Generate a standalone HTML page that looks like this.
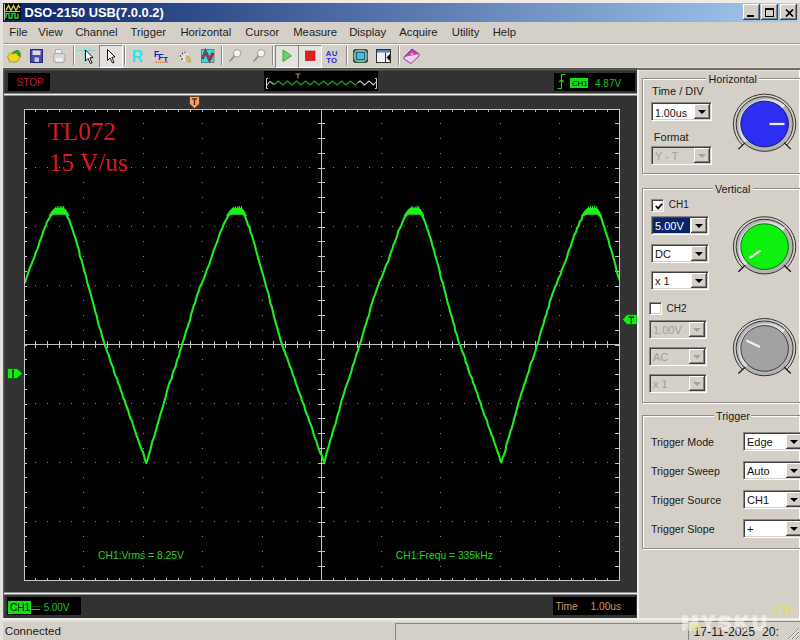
<!DOCTYPE html>
<html><head><meta charset="utf-8">
<style>
html,body{margin:0;padding:0}
body{width:800px;height:640px;overflow:hidden;background:#d4d0c8;position:relative;font-family:"Liberation Sans",sans-serif;font-size:12px;color:#000}
.a{position:absolute}
.t{position:absolute;white-space:nowrap;line-height:1}
.sep{position:absolute;top:46px;width:1px;height:19px;background:#8a8782;border-right:1px solid #fff}
.pbtn{position:absolute;top:45px;height:21px;border-top:1px solid #8a8782;border-left:1px solid #8a8782;border-right:1px solid #fff;border-bottom:1px solid #fff;background:#e4e2dc}
.grp{position:absolute;border:1px solid #8e8b86;box-shadow:inset 1px 1px 0 #fff, 1px 1px 0 #fff}
.gbg{position:absolute;background:#d4d0c8;height:5px}
.cb{position:absolute;border:1px solid;border-color:#8a8782 #fff #fff #8a8782;box-shadow:inset 1px 1px 0 #404040, inset -1px -1px 0 #d4d0c8}
.btn{position:absolute;top:1px;width:16px;height:15px;background:#d4d0c8;box-shadow:inset -1px -1px 0 #404040, inset 1px 1px 0 #fff, inset -2px -2px 0 #808080}
.arr{position:absolute;left:4px;top:6px;width:0;height:0;border-left:4px solid transparent;border-right:4px solid transparent;border-top:4px solid #000}
.arr.dis{border-top-color:#a4a09a}
.chk{position:absolute;width:9px;height:9px;background:#fff;border:1px solid;border-color:#8a8782 #fff #fff #8a8782;box-shadow:inset 1px 1px 0 #404040, inset -1px -1px 0 #d4d0c8;padding:1px}
</style></head><body>

<div class="a" style="left:0px;top:0px;width:800px;height:3px;background:#eeebe6;"></div>
<div class="a" style="left:3px;top:3px;width:795px;height:19px;background:linear-gradient(to right,#0a246a 0%,#a6caf0 100%);"></div>
<svg class="a" style="left:4px;top:4px" width="17" height="16" viewBox="0 0 17 16">
<rect x="0" y="0" width="17" height="16" fill="#000"/>
<path d="M0.5 0V16" stroke="#b8c0c0" stroke-width="1"/>
<path d="M2 6.5 L4.5 1.5 L7 6.5 L9.5 1.5 L12 6.5 L14.5 1.5 L16 4" stroke="#d8d040" stroke-width="1.4" fill="none"/>
<path d="M1 7.5H16" stroke="#60d8c8" stroke-width="1"/>
<path d="M2 14V9.5H5V14H8V9.5H11V14H14V9.5" stroke="#28d838" stroke-width="1.4" fill="none"/>
</svg>
<div class="t" style="left:24.50px;top:6.72px;font-size:12.85px;color:#fff;font-weight:bold;">DSO-2150 USB(7.0.0.2)</div>
<div class="a" style="left:743px;top:4px;width:17px;height:16px;background:#d4d0c8;box-shadow:inset -1px -1px 0 #404040,inset 1px 1px 0 #fff,inset -2px -2px 0 #808080"></div>
<div class="a" style="left:761px;top:4px;width:17px;height:16px;background:#d4d0c8;box-shadow:inset -1px -1px 0 #404040,inset 1px 1px 0 #fff,inset -2px -2px 0 #808080"></div>
<div class="a" style="left:780px;top:4px;width:17px;height:16px;background:#d4d0c8;box-shadow:inset -1px -1px 0 #404040,inset 1px 1px 0 #fff,inset -2px -2px 0 #808080"></div>
<div class="a" style="left:747px;top:15px;width:7px;height:2px;background:#000;"></div>
<div class="a" style="left:765px;top:8px;width:7px;height:6px;border:1px solid #000;border-top-width:2px"></div>
<svg class="a" style="left:784.5px;top:8.5px" width="9" height="8"><path d="M1 0.5L8 7.5M8 0.5L1 7.5" stroke="#000" stroke-width="1.7"/></svg>
<div class="t" style="left:9.30px;top:26.73px;font-size:11.30px;color:#1e1e1e;">File</div>
<div class="t" style="left:38.30px;top:26.73px;font-size:11.30px;color:#1e1e1e;">View</div>
<div class="t" style="left:75.40px;top:26.73px;font-size:11.30px;color:#1e1e1e;">Channel</div>
<div class="t" style="left:130.60px;top:26.73px;font-size:11.30px;color:#1e1e1e;">Trigger</div>
<div class="t" style="left:180.40px;top:26.73px;font-size:11.30px;color:#1e1e1e;">Horizontal</div>
<div class="t" style="left:245.30px;top:26.73px;font-size:11.30px;color:#1e1e1e;">Cursor</div>
<div class="t" style="left:293.20px;top:26.73px;font-size:11.30px;color:#1e1e1e;">Measure</div>
<div class="t" style="left:349.20px;top:26.73px;font-size:11.30px;color:#1e1e1e;">Display</div>
<div class="t" style="left:399.30px;top:26.73px;font-size:11.30px;color:#1e1e1e;">Acquire</div>
<div class="t" style="left:451.80px;top:26.73px;font-size:11.30px;color:#1e1e1e;">Utility</div>
<div class="t" style="left:492.70px;top:26.73px;font-size:11.30px;color:#1e1e1e;">Help</div>
<div class="a" style="left:3px;top:43px;width:797px;height:1px;background:#a09d98;"></div>
<div class="a" style="left:3px;top:44px;width:797px;height:1px;background:#f6f5f2;"></div>
<div class="a" style="left:3px;top:67px;width:797px;height:1px;background:#dedbd6;"></div>
<div class="sep" style="left:73px"></div>
<div class="sep" style="left:124px"></div>
<div class="sep" style="left:221px"></div>
<div class="sep" style="left:272px"></div>
<div class="sep" style="left:346px"></div>
<div class="sep" style="left:398px"></div>
<div class="pbtn" style="left:99px;width:22px"></div>
<div class="pbtn" style="left:275px;width:22px"></div>
<div class="pbtn" style="left:298px;width:22px"></div>
<svg class="a" style="left:0;top:42px" width="430" height="26" viewBox="0 42 430 26">
<path d="M7.5 56 L12 52 L19 53.5 L20.5 57 L17 62 L9.5 62 Z" fill="#f0d820" stroke="#9a8a10" stroke-width="0.7"/>
<path d="M12 54 Q14.5 49.5 18.5 50.5 Q21 52 20.3 56.5 L18 55.5 Q18 52.5 15 53 Z" fill="#28b028" stroke="#187018" stroke-width="0.5"/>
<rect x="30.5" y="49.5" width="12" height="13" fill="#4a4aac" stroke="#28287a" stroke-width="1"/>
<rect x="32.5" y="50.5" width="8" height="4.5" fill="#d8d8e8"/>
<rect x="34.5" y="57.5" width="4.5" height="4.5" fill="#c8c8e0"/>
<path d="M55.5 49.5 H61.5 V54 H55.5 Z" fill="#e8f0f8" stroke="#a0a8b8" stroke-width="0.8"/>
<path d="M53.5 55.5 Q53.5 53.5 56 53.5 H62.5 Q65 53.5 65 55.5 V60 Q65 62.5 62 62.5 H56 Q53.5 62.5 53.5 60 Z" fill="#d8d8d8" stroke="#9a9a9a" stroke-width="0.8"/>
<path d="M56 58.5 H62.5 V61.5 H56 Z" fill="#f4f4f4"/>
<path d="M78 50.5 H96 M85 48 V64" stroke="#38d8d8" stroke-width="1.2" stroke-dasharray="1.5 1"/>
<path d="M85.5 50 L85.5 61 L88 58.5 L90.5 63.5 L92 62.8 L89.8 57.8 L93 57.5 Z" fill="#fff" stroke="#000" stroke-width="0.9"/>
<path d="M107.5 49.5 L107.5 60.5 L110 58 L112.5 63 L114 62.3 L111.8 57.3 L115 57 Z" fill="#fff" stroke="#000" stroke-width="0.9"/>
<text x="131.5" y="62" font-family="Liberation Sans" font-weight="bold" font-size="16" fill="#30e4f4">R</text>
<text x="154" y="56.6" font-family="Liberation Sans" font-weight="bold" font-size="8.5" fill="#1818c8">F</text>
<text x="158.3" y="60" font-family="Liberation Sans" font-weight="bold" font-size="8.5" fill="#1818c8">F</text>
<text x="163.3" y="62.2" font-family="Liberation Sans" font-weight="bold" font-size="8" fill="#1818c8">T</text>
<path d="M155.5 62.3 H168.5" stroke="#f07858" stroke-width="1.4" stroke-dasharray="1.5 0.7"/>
<circle cx="184" cy="56.5" r="5.8" fill="#e4e4e4" stroke="#b8b8b8" stroke-width="0.7"/>
<circle cx="182.5" cy="53.5" r="0.9" fill="#505050"/><circle cx="180.5" cy="56" r="0.9" fill="#505050"/><circle cx="182" cy="59" r="0.9" fill="#505050"/><circle cx="185" cy="52.5" r="0.9" fill="#707070"/>
<path d="M186.5 55 Q191.5 58 190.5 62.3 Q186 62.5 186 59 Z" fill="#d4c060" stroke="#9a8a30" stroke-width="0.5"/>
<rect x="201.5" y="49.5" width="12.5" height="13" fill="#30e0e4" stroke="#507070" stroke-width="0.8"/>
<path d="M202.3 59 L205.5 51.5 L209.5 60 L213 53" stroke="#6a4a5c" stroke-width="3" fill="none"/>
<path d="M209.5 60 L213 53" stroke="#c42044" stroke-width="2.6" fill="none"/>
<circle cx="237" cy="53.3" r="3.6" fill="#f4f4f4" stroke="#a8a8a8" stroke-width="1.2"/>
<path d="M234.5 56 L229.5 61.5" stroke="#909090" stroke-width="1.8"/>
<circle cx="261" cy="53.3" r="3.6" fill="#f4f4f4" stroke="#a8a8a8" stroke-width="1.2"/>
<path d="M258.5 56 L253.5 61.5" stroke="#909090" stroke-width="1.8"/>
<path d="M283 50 L291.5 55.8 L283 61.5 Z" fill="#68d468" stroke="#309030" stroke-width="0.8"/>
<rect x="305.5" y="51" width="9.5" height="9.5" fill="#e42020" stroke="#a01010" stroke-width="0.6"/>
<text x="325.8" y="55.6" font-family="Liberation Sans" font-weight="bold" font-size="7.7" fill="#2c2ce4" letter-spacing="0.3">AU</text>
<text x="326.2" y="62.8" font-family="Liberation Sans" font-weight="bold" font-size="7.7" fill="#2c2ce4" letter-spacing="0.3">TO</text>
<rect x="353.5" y="49.5" width="14" height="13" rx="2" fill="#78b898" stroke="#406050" stroke-width="1"/>
<rect x="356.5" y="52.5" width="8" height="7" fill="#48bce4" stroke="#204060" stroke-width="0.8"/>
<path d="M354 50 h2.5 M354 50 v2.5 M367 50 h-2.5 M367 50 v2.5 M354 62 h2.5 M354 62 v-2.5 M367 62 h-2.5 M367 62 v-2.5" stroke="#203028" stroke-width="1.2"/>
<rect x="376.5" y="49.5" width="14" height="13" fill="#f0f0f0" stroke="#303030" stroke-width="1"/>
<rect x="377" y="50" width="13" height="2.5" fill="#5080d0"/>
<path d="M385.5 52.5 V62" stroke="#303030" stroke-width="1"/>
<path d="M390 54 L386.5 57.5 L390 61 Z" fill="#000"/>
<path d="M404 57 L412 49 L419 54 L411 62 Z" fill="#c040c0" stroke="#702070" stroke-width="0.8"/>
<path d="M404 57 L404 59 L411 63.5 L419 56 L419 54" fill="#f0d0f0" stroke="#702070" stroke-width="0.8"/>
<circle cx="412" cy="54" r="1.5" fill="#f0a060"/>
</svg>

<div class="a" style="left:3px;top:68px;width:634px;height:550px;background:#323232;"></div>
<div class="a" style="left:3px;top:68px;width:634px;height:1px;background:#4e4e4e;"></div>
<div class="a" style="left:3px;top:69px;width:634px;height:1px;background:#5c5c5c;"></div>
<div class="a" style="left:3px;top:70px;width:634px;height:1px;background:#444;"></div>
<div class="a" style="left:3px;top:68px;width:1px;height:550px;background:#5e5e5e;"></div>
<div class="a" style="left:4px;top:71px;width:1px;height:547px;background:#444;"></div>
<div class="a" style="left:4px;top:93px;width:633px;height:1px;background:#8c8c8c;"></div>
<div class="a" style="left:4px;top:94px;width:633px;height:1px;background:#f0f0f0;"></div>
<div class="a" style="left:4px;top:95px;width:633px;height:1px;background:#8c8c8c;"></div>
<div class="a" style="left:4px;top:592px;width:633px;height:1px;background:#8c8c8c;"></div>
<div class="a" style="left:4px;top:593px;width:633px;height:1px;background:#f0f0f0;"></div>
<div class="a" style="left:4px;top:594px;width:633px;height:1px;background:#8c8c8c;"></div>
<div class="a" style="left:637px;top:70px;width:2px;height:550px;background:#f2f2f2;"></div>
<div class="a" style="left:3px;top:618px;width:797px;height:2px;background:#efeeea;"></div>
<div class="a" style="left:3px;top:620px;width:797px;height:2px;background:#e2dfda;"></div>
<div class="a" style="left:0px;top:0px;width:3px;height:640px;background:#e4e1dc;"></div>
<div class="a" style="left:8px;top:73px;width:42px;height:18px;background:#000;"></div>
<div class="t" style="left:16.50px;top:78.05px;font-size:10.10px;color:#c01e2c;">STOP</div>
<div class="a" style="left:264px;top:71px;width:114px;height:20px;background:#000;"></div>
<svg class="a" style="left:264px;top:71px" width="114" height="20" viewBox="264 71 114 20">
<path d="M268 78.5 H266.5 V88.5 H268 M375 78.5 H376.5 V88.5 H375" stroke="#d0d0d0" stroke-width="1" fill="none"/>
<path d="M274 84.5 L278.5 81 L283 85 L287.5 81 L292 85 L296.5 81 L301 85 L305.5 81 L310 85 L314.5 81 L319 85 L323.5 81 L328 85 L332.5 81 L337 85 L341.5 81 L346 85 L350.5 81 L355 85 L358 82.5" stroke="#1aa81a" stroke-width="1.2" fill="none"/>
<path d="M267 85 L270 81.5 L274 84.5" stroke="#c8c8c8" stroke-width="1.1" fill="none"/>
<path d="M358 82.5 L360 81 L364.5 85 L369 81 L373.5 85 L376 82" stroke="#c8c8c8" stroke-width="1.1" fill="none"/>
<path d="M295.5 74 H300.5 M298 74 V78.5" stroke="#b88050" stroke-width="1.2"/>
</svg>
<div class="a" style="left:554px;top:72.5px;width:81px;height:18.7px;background:#000;"></div>
<svg class="a" style="left:557px;top:73px" width="9" height="17"><path d="M0.5 15.5H4.5V1.5H8.5 M2.2 9 L4.5 6.8 L6.8 9" stroke="#28d028" stroke-width="1.1" fill="none"/></svg>
<div class="a" style="left:570px;top:78px;width:18px;height:10px;background:#10e010;"></div>
<div class="t" style="left:572.00px;top:79.63px;font-size:8.00px;color:#000;letter-spacing:-0.2px">CH1</div>
<div class="t" style="left:595.00px;top:78.53px;font-size:10.00px;color:#22c022;">4.87V</div>
<div class="a" style="left:24px;top:109px;width:596px;height:472px;background:#000;"></div>
<svg class="a" style="left:0;top:0" width="640" height="640" viewBox="0 0 640 640">
<defs><clipPath id="gc"><rect x="25" y="110" width="594" height="470"/></clipPath></defs>
<path d="M35 167h1v1h-1zM47 167h1v1h-1zM59 167h1v1h-1zM71 167h1v1h-1zM83 167h1v1h-1zM95 167h1v1h-1zM107 167h1v1h-1zM119 167h1v1h-1zM131 167h1v1h-1zM143 167h1v1h-1zM154 167h1v1h-1zM166 167h1v1h-1zM178 167h1v1h-1zM190 167h1v1h-1zM202 167h1v1h-1zM214 167h1v1h-1zM226 167h1v1h-1zM238 167h1v1h-1zM250 167h1v1h-1zM262 167h1v1h-1zM273 167h1v1h-1zM285 167h1v1h-1zM297 167h1v1h-1zM309 167h1v1h-1zM321 167h1v1h-1zM333 167h1v1h-1zM345 167h1v1h-1zM357 167h1v1h-1zM369 167h1v1h-1zM381 167h1v1h-1zM392 167h1v1h-1zM404 167h1v1h-1zM416 167h1v1h-1zM428 167h1v1h-1zM440 167h1v1h-1zM452 167h1v1h-1zM464 167h1v1h-1zM476 167h1v1h-1zM488 167h1v1h-1zM500 167h1v1h-1zM511 167h1v1h-1zM523 167h1v1h-1zM535 167h1v1h-1zM547 167h1v1h-1zM559 167h1v1h-1zM571 167h1v1h-1zM583 167h1v1h-1zM595 167h1v1h-1zM607 167h1v1h-1zM35 226h1v1h-1zM47 226h1v1h-1zM59 226h1v1h-1zM71 226h1v1h-1zM83 226h1v1h-1zM95 226h1v1h-1zM107 226h1v1h-1zM119 226h1v1h-1zM131 226h1v1h-1zM143 226h1v1h-1zM154 226h1v1h-1zM166 226h1v1h-1zM178 226h1v1h-1zM190 226h1v1h-1zM202 226h1v1h-1zM214 226h1v1h-1zM226 226h1v1h-1zM238 226h1v1h-1zM250 226h1v1h-1zM262 226h1v1h-1zM273 226h1v1h-1zM285 226h1v1h-1zM297 226h1v1h-1zM309 226h1v1h-1zM321 226h1v1h-1zM333 226h1v1h-1zM345 226h1v1h-1zM357 226h1v1h-1zM369 226h1v1h-1zM381 226h1v1h-1zM392 226h1v1h-1zM404 226h1v1h-1zM416 226h1v1h-1zM428 226h1v1h-1zM440 226h1v1h-1zM452 226h1v1h-1zM464 226h1v1h-1zM476 226h1v1h-1zM488 226h1v1h-1zM500 226h1v1h-1zM511 226h1v1h-1zM523 226h1v1h-1zM535 226h1v1h-1zM547 226h1v1h-1zM559 226h1v1h-1zM571 226h1v1h-1zM583 226h1v1h-1zM595 226h1v1h-1zM607 226h1v1h-1zM35 285h1v1h-1zM47 285h1v1h-1zM59 285h1v1h-1zM71 285h1v1h-1zM83 285h1v1h-1zM95 285h1v1h-1zM107 285h1v1h-1zM119 285h1v1h-1zM131 285h1v1h-1zM143 285h1v1h-1zM154 285h1v1h-1zM166 285h1v1h-1zM178 285h1v1h-1zM190 285h1v1h-1zM202 285h1v1h-1zM214 285h1v1h-1zM226 285h1v1h-1zM238 285h1v1h-1zM250 285h1v1h-1zM262 285h1v1h-1zM273 285h1v1h-1zM285 285h1v1h-1zM297 285h1v1h-1zM309 285h1v1h-1zM321 285h1v1h-1zM333 285h1v1h-1zM345 285h1v1h-1zM357 285h1v1h-1zM369 285h1v1h-1zM381 285h1v1h-1zM392 285h1v1h-1zM404 285h1v1h-1zM416 285h1v1h-1zM428 285h1v1h-1zM440 285h1v1h-1zM452 285h1v1h-1zM464 285h1v1h-1zM476 285h1v1h-1zM488 285h1v1h-1zM500 285h1v1h-1zM511 285h1v1h-1zM523 285h1v1h-1zM535 285h1v1h-1zM547 285h1v1h-1zM559 285h1v1h-1zM571 285h1v1h-1zM583 285h1v1h-1zM595 285h1v1h-1zM607 285h1v1h-1zM35 403h1v1h-1zM47 403h1v1h-1zM59 403h1v1h-1zM71 403h1v1h-1zM83 403h1v1h-1zM95 403h1v1h-1zM107 403h1v1h-1zM119 403h1v1h-1zM131 403h1v1h-1zM143 403h1v1h-1zM154 403h1v1h-1zM166 403h1v1h-1zM178 403h1v1h-1zM190 403h1v1h-1zM202 403h1v1h-1zM214 403h1v1h-1zM226 403h1v1h-1zM238 403h1v1h-1zM250 403h1v1h-1zM262 403h1v1h-1zM273 403h1v1h-1zM285 403h1v1h-1zM297 403h1v1h-1zM309 403h1v1h-1zM321 403h1v1h-1zM333 403h1v1h-1zM345 403h1v1h-1zM357 403h1v1h-1zM369 403h1v1h-1zM381 403h1v1h-1zM392 403h1v1h-1zM404 403h1v1h-1zM416 403h1v1h-1zM428 403h1v1h-1zM440 403h1v1h-1zM452 403h1v1h-1zM464 403h1v1h-1zM476 403h1v1h-1zM488 403h1v1h-1zM500 403h1v1h-1zM511 403h1v1h-1zM523 403h1v1h-1zM535 403h1v1h-1zM547 403h1v1h-1zM559 403h1v1h-1zM571 403h1v1h-1zM583 403h1v1h-1zM595 403h1v1h-1zM607 403h1v1h-1zM35 462h1v1h-1zM47 462h1v1h-1zM59 462h1v1h-1zM71 462h1v1h-1zM83 462h1v1h-1zM95 462h1v1h-1zM107 462h1v1h-1zM119 462h1v1h-1zM131 462h1v1h-1zM143 462h1v1h-1zM154 462h1v1h-1zM166 462h1v1h-1zM178 462h1v1h-1zM190 462h1v1h-1zM202 462h1v1h-1zM214 462h1v1h-1zM226 462h1v1h-1zM238 462h1v1h-1zM250 462h1v1h-1zM262 462h1v1h-1zM273 462h1v1h-1zM285 462h1v1h-1zM297 462h1v1h-1zM309 462h1v1h-1zM321 462h1v1h-1zM333 462h1v1h-1zM345 462h1v1h-1zM357 462h1v1h-1zM369 462h1v1h-1zM381 462h1v1h-1zM392 462h1v1h-1zM404 462h1v1h-1zM416 462h1v1h-1zM428 462h1v1h-1zM440 462h1v1h-1zM452 462h1v1h-1zM464 462h1v1h-1zM476 462h1v1h-1zM488 462h1v1h-1zM500 462h1v1h-1zM511 462h1v1h-1zM523 462h1v1h-1zM535 462h1v1h-1zM547 462h1v1h-1zM559 462h1v1h-1zM571 462h1v1h-1zM583 462h1v1h-1zM595 462h1v1h-1zM607 462h1v1h-1zM35 521h1v1h-1zM47 521h1v1h-1zM59 521h1v1h-1zM71 521h1v1h-1zM83 521h1v1h-1zM95 521h1v1h-1zM107 521h1v1h-1zM119 521h1v1h-1zM131 521h1v1h-1zM143 521h1v1h-1zM154 521h1v1h-1zM166 521h1v1h-1zM178 521h1v1h-1zM190 521h1v1h-1zM202 521h1v1h-1zM214 521h1v1h-1zM226 521h1v1h-1zM238 521h1v1h-1zM250 521h1v1h-1zM262 521h1v1h-1zM273 521h1v1h-1zM285 521h1v1h-1zM297 521h1v1h-1zM309 521h1v1h-1zM321 521h1v1h-1zM333 521h1v1h-1zM345 521h1v1h-1zM357 521h1v1h-1zM369 521h1v1h-1zM381 521h1v1h-1zM392 521h1v1h-1zM404 521h1v1h-1zM416 521h1v1h-1zM428 521h1v1h-1zM440 521h1v1h-1zM452 521h1v1h-1zM464 521h1v1h-1zM476 521h1v1h-1zM488 521h1v1h-1zM500 521h1v1h-1zM511 521h1v1h-1zM523 521h1v1h-1zM535 521h1v1h-1zM547 521h1v1h-1zM559 521h1v1h-1zM571 521h1v1h-1zM583 521h1v1h-1zM595 521h1v1h-1zM607 521h1v1h-1zM83 123h1v1h-1zM83 138h1v1h-1zM83 153h1v1h-1zM83 182h1v1h-1zM83 197h1v1h-1zM83 212h1v1h-1zM83 241h1v1h-1zM83 256h1v1h-1zM83 271h1v1h-1zM83 300h1v1h-1zM83 315h1v1h-1zM83 330h1v1h-1zM83 359h1v1h-1zM83 374h1v1h-1zM83 389h1v1h-1zM83 418h1v1h-1zM83 433h1v1h-1zM83 448h1v1h-1zM83 477h1v1h-1zM83 492h1v1h-1zM83 507h1v1h-1zM83 536h1v1h-1zM83 551h1v1h-1zM83 566h1v1h-1zM143 123h1v1h-1zM143 138h1v1h-1zM143 153h1v1h-1zM143 182h1v1h-1zM143 197h1v1h-1zM143 212h1v1h-1zM143 241h1v1h-1zM143 256h1v1h-1zM143 271h1v1h-1zM143 300h1v1h-1zM143 315h1v1h-1zM143 330h1v1h-1zM143 359h1v1h-1zM143 374h1v1h-1zM143 389h1v1h-1zM143 418h1v1h-1zM143 433h1v1h-1zM143 448h1v1h-1zM143 477h1v1h-1zM143 492h1v1h-1zM143 507h1v1h-1zM143 536h1v1h-1zM143 551h1v1h-1zM143 566h1v1h-1zM202 123h1v1h-1zM202 138h1v1h-1zM202 153h1v1h-1zM202 182h1v1h-1zM202 197h1v1h-1zM202 212h1v1h-1zM202 241h1v1h-1zM202 256h1v1h-1zM202 271h1v1h-1zM202 300h1v1h-1zM202 315h1v1h-1zM202 330h1v1h-1zM202 359h1v1h-1zM202 374h1v1h-1zM202 389h1v1h-1zM202 418h1v1h-1zM202 433h1v1h-1zM202 448h1v1h-1zM202 477h1v1h-1zM202 492h1v1h-1zM202 507h1v1h-1zM202 536h1v1h-1zM202 551h1v1h-1zM202 566h1v1h-1zM262 123h1v1h-1zM262 138h1v1h-1zM262 153h1v1h-1zM262 182h1v1h-1zM262 197h1v1h-1zM262 212h1v1h-1zM262 241h1v1h-1zM262 256h1v1h-1zM262 271h1v1h-1zM262 300h1v1h-1zM262 315h1v1h-1zM262 330h1v1h-1zM262 359h1v1h-1zM262 374h1v1h-1zM262 389h1v1h-1zM262 418h1v1h-1zM262 433h1v1h-1zM262 448h1v1h-1zM262 477h1v1h-1zM262 492h1v1h-1zM262 507h1v1h-1zM262 536h1v1h-1zM262 551h1v1h-1zM262 566h1v1h-1zM381 123h1v1h-1zM381 138h1v1h-1zM381 153h1v1h-1zM381 182h1v1h-1zM381 197h1v1h-1zM381 212h1v1h-1zM381 241h1v1h-1zM381 256h1v1h-1zM381 271h1v1h-1zM381 300h1v1h-1zM381 315h1v1h-1zM381 330h1v1h-1zM381 359h1v1h-1zM381 374h1v1h-1zM381 389h1v1h-1zM381 418h1v1h-1zM381 433h1v1h-1zM381 448h1v1h-1zM381 477h1v1h-1zM381 492h1v1h-1zM381 507h1v1h-1zM381 536h1v1h-1zM381 551h1v1h-1zM381 566h1v1h-1zM440 123h1v1h-1zM440 138h1v1h-1zM440 153h1v1h-1zM440 182h1v1h-1zM440 197h1v1h-1zM440 212h1v1h-1zM440 241h1v1h-1zM440 256h1v1h-1zM440 271h1v1h-1zM440 300h1v1h-1zM440 315h1v1h-1zM440 330h1v1h-1zM440 359h1v1h-1zM440 374h1v1h-1zM440 389h1v1h-1zM440 418h1v1h-1zM440 433h1v1h-1zM440 448h1v1h-1zM440 477h1v1h-1zM440 492h1v1h-1zM440 507h1v1h-1zM440 536h1v1h-1zM440 551h1v1h-1zM440 566h1v1h-1zM500 123h1v1h-1zM500 138h1v1h-1zM500 153h1v1h-1zM500 182h1v1h-1zM500 197h1v1h-1zM500 212h1v1h-1zM500 241h1v1h-1zM500 256h1v1h-1zM500 271h1v1h-1zM500 300h1v1h-1zM500 315h1v1h-1zM500 330h1v1h-1zM500 359h1v1h-1zM500 374h1v1h-1zM500 389h1v1h-1zM500 418h1v1h-1zM500 433h1v1h-1zM500 448h1v1h-1zM500 477h1v1h-1zM500 492h1v1h-1zM500 507h1v1h-1zM500 536h1v1h-1zM500 551h1v1h-1zM500 566h1v1h-1zM559 123h1v1h-1zM559 138h1v1h-1zM559 153h1v1h-1zM559 182h1v1h-1zM559 197h1v1h-1zM559 212h1v1h-1zM559 241h1v1h-1zM559 256h1v1h-1zM559 271h1v1h-1zM559 300h1v1h-1zM559 315h1v1h-1zM559 330h1v1h-1zM559 359h1v1h-1zM559 374h1v1h-1zM559 389h1v1h-1zM559 418h1v1h-1zM559 433h1v1h-1zM559 448h1v1h-1zM559 477h1v1h-1zM559 492h1v1h-1zM559 507h1v1h-1zM559 536h1v1h-1zM559 551h1v1h-1zM559 566h1v1h-1z" fill="#8a8a8a"/>
<path d="M24 344.5H619 M321.5 109V580" stroke="#c4c4c4" stroke-width="1" fill="none"/>
<path d="M35.5 109v3M35.5 581v-3M35.5 341v7M47.5 109v3M47.5 581v-3M47.5 341v7M59.5 109v3M59.5 581v-3M59.5 341v7M71.5 109v3M71.5 581v-3M71.5 341v7M83.5 109v3M83.5 581v-3M83.5 341v7M95.5 109v3M95.5 581v-3M95.5 341v7M107.5 109v3M107.5 581v-3M107.5 341v7M119.5 109v3M119.5 581v-3M119.5 341v7M131.5 109v3M131.5 581v-3M131.5 341v7M143.5 109v3M143.5 581v-3M143.5 341v7M154.5 109v3M154.5 581v-3M154.5 341v7M166.5 109v3M166.5 581v-3M166.5 341v7M178.5 109v3M178.5 581v-3M178.5 341v7M190.5 109v3M190.5 581v-3M190.5 341v7M202.5 109v3M202.5 581v-3M202.5 341v7M214.5 109v3M214.5 581v-3M214.5 341v7M226.5 109v3M226.5 581v-3M226.5 341v7M238.5 109v3M238.5 581v-3M238.5 341v7M250.5 109v3M250.5 581v-3M250.5 341v7M262.5 109v3M262.5 581v-3M262.5 341v7M273.5 109v3M273.5 581v-3M273.5 341v7M285.5 109v3M285.5 581v-3M285.5 341v7M297.5 109v3M297.5 581v-3M297.5 341v7M309.5 109v3M309.5 581v-3M309.5 341v7M321.5 109v3M321.5 581v-3M321.5 341v7M333.5 109v3M333.5 581v-3M333.5 341v7M345.5 109v3M345.5 581v-3M345.5 341v7M357.5 109v3M357.5 581v-3M357.5 341v7M369.5 109v3M369.5 581v-3M369.5 341v7M381.5 109v3M381.5 581v-3M381.5 341v7M392.5 109v3M392.5 581v-3M392.5 341v7M404.5 109v3M404.5 581v-3M404.5 341v7M416.5 109v3M416.5 581v-3M416.5 341v7M428.5 109v3M428.5 581v-3M428.5 341v7M440.5 109v3M440.5 581v-3M440.5 341v7M452.5 109v3M452.5 581v-3M452.5 341v7M464.5 109v3M464.5 581v-3M464.5 341v7M476.5 109v3M476.5 581v-3M476.5 341v7M488.5 109v3M488.5 581v-3M488.5 341v7M500.5 109v3M500.5 581v-3M500.5 341v7M511.5 109v3M511.5 581v-3M511.5 341v7M523.5 109v3M523.5 581v-3M523.5 341v7M535.5 109v3M535.5 581v-3M535.5 341v7M547.5 109v3M547.5 581v-3M547.5 341v7M559.5 109v3M559.5 581v-3M559.5 341v7M571.5 109v3M571.5 581v-3M571.5 341v7M583.5 109v3M583.5 581v-3M583.5 341v7M595.5 109v3M595.5 581v-3M595.5 341v7M607.5 109v3M607.5 581v-3M607.5 341v7M24 123.5h3M620 123.5h-5M318 123.5h7M24 138.5h3M620 138.5h-5M318 138.5h7M24 153.5h3M620 153.5h-5M318 153.5h7M24 168.5h3M620 168.5h-5M318 168.5h7M24 182.5h3M620 182.5h-5M318 182.5h7M24 197.5h3M620 197.5h-5M318 197.5h7M24 212.5h3M620 212.5h-5M318 212.5h7M24 227.5h3M620 227.5h-5M318 227.5h7M24 241.5h3M620 241.5h-5M318 241.5h7M24 256.5h3M620 256.5h-5M318 256.5h7M24 271.5h3M620 271.5h-5M318 271.5h7M24 286.5h3M620 286.5h-5M318 286.5h7M24 300.5h3M620 300.5h-5M318 300.5h7M24 315.5h3M620 315.5h-5M318 315.5h7M24 330.5h3M620 330.5h-5M318 330.5h7M24 345.5h3M620 345.5h-5M24 359.5h3M620 359.5h-5M318 359.5h7M24 374.5h3M620 374.5h-5M318 374.5h7M24 389.5h3M620 389.5h-5M318 389.5h7M24 404.5h3M620 404.5h-5M318 404.5h7M24 418.5h3M620 418.5h-5M318 418.5h7M24 433.5h3M620 433.5h-5M318 433.5h7M24 448.5h3M620 448.5h-5M318 448.5h7M24 463.5h3M620 463.5h-5M318 463.5h7M24 477.5h3M620 477.5h-5M318 477.5h7M24 492.5h3M620 492.5h-5M318 492.5h7M24 507.5h3M620 507.5h-5M318 507.5h7M24 522.5h3M620 522.5h-5M318 522.5h7M24 536.5h3M620 536.5h-5M318 536.5h7M24 551.5h3M620 551.5h-5M318 551.5h7M24 566.5h3M620 566.5h-5M318 566.5h7" stroke="#c4c4c4" stroke-width="1" fill="none"/>
<rect x="24.5" y="109.5" width="595" height="471" fill="none" stroke="#c8c8c8" stroke-width="1"/>
<g clip-path="url(#gc)">
<path d="M-19.9 423.1 L-18.4 418.6 L-17.2 414.7 L-16.3 410.5 L-15.0 406.0 L-13.8 401.1 L-12.3 397.9 L-11.2 392.6 L-9.7 389.9 L-8.5 385.3 L-7.0 381.0 L-5.9 377.6 L-5.1 373.5 L-3.7 370.9 L-2.6 366.7 L-1.1 362.6 L0.1 358.4 L1.0 354.8 L2.6 351.4 L3.7 347.9 L5.0 343.7 L6.4 340.2 L7.3 335.8 L8.8 332.1 L10.1 327.0 L11.5 322.6 L12.5 319.4 L13.5 314.8 L14.7 310.9 L16.4 306.6 L17.7 302.0 L18.9 298.3 L20.0 293.9 L21.5 291.4 L22.6 287.7 L23.6 284.4 L25.3 281.6 L26.7 277.2 L27.7 274.5 L28.8 270.8 L30.2 267.0 L31.4 264.7 L32.8 260.6 L34.3 257.8 L35.4 253.3 L37.0 250.1 L38.5 246.2 L39.5 241.7 L40.9 238.6 L42.5 234.2 L43.3 231.1 L44.6 228.2 L46.1 224.6 L47.0 222.0 L48.6 219.4 L50.3 216.8 L51.5 214.7 L53.1 211.8 L54.7 212.2 L56.2 211.5 L57.4 210.8 L58.8 211.2 L60.2 210.3 L61.8 210.5 L63.4 211.0 L64.7 211.9 L66.3 214.5 L67.7 217.6 L69.4 220.1 L70.5 224.1 L71.9 227.4 L73.5 232.8 L74.6 236.0 L75.8 239.4 L77.3 244.8 L79.0 249.9 L79.9 256.3 L81.6 260.2 L83.0 265.2 L84.3 271.3 L85.7 275.3 L86.6 279.3 L87.8 284.4 L89.3 289.1 L90.4 292.9 L91.9 298.8 L93.2 303.2 L94.4 307.7 L95.3 312.0 L96.7 315.9 L97.7 321.0 L99.1 326.3 L100.8 330.6 L102.0 336.1 L103.3 339.8 L104.3 343.6 L105.8 347.5 L107.3 352.1 L108.7 354.9 L109.8 358.9 L110.7 362.2 L112.4 365.9 L113.5 368.9 L114.4 372.9 L115.7 376.4 L117.3 379.2 L118.2 383.6 L119.6 385.8 L120.5 389.3 L122.2 393.8 L123.0 397.3 L124.7 400.5 L125.5 403.8 L126.6 406.5 L128.4 411.0 L129.3 414.9 L130.5 418.3 L132.0 420.7 L132.9 424.3 L134.1 428.3 L135.3 431.5 L136.5 435.8 L137.8 438.5 L139.2 442.7 L140.3 446.2 L141.6 449.1 L142.8 451.8 L144.0 455.5 L145.0 460.0 L146.3 463.0 L147.9 458.7 L148.9 454.3 L150.3 450.3 L151.3 445.6 L152.6 440.8 L154.2 436.8 L155.3 432.8 L156.7 427.9 L157.8 423.6 L159.0 419.6 L160.2 414.9 L161.5 411.2 L162.9 406.7 L164.3 401.4 L165.3 398.1 L166.7 392.4 L167.5 389.1 L168.7 385.0 L169.9 382.0 L171.6 378.6 L172.4 374.5 L174.0 369.8 L175.3 367.4 L176.2 363.6 L177.5 359.1 L179.1 355.8 L179.8 351.4 L181.3 347.5 L182.3 343.7 L183.9 339.1 L185.0 335.6 L186.0 331.2 L187.6 327.4 L188.5 323.9 L190.2 319.8 L191.0 314.5 L192.2 311.1 L193.6 305.9 L195.0 303.0 L196.4 297.8 L197.3 294.7 L198.8 291.0 L199.9 286.7 L201.5 284.0 L202.4 281.5 L204.1 278.0 L205.1 274.8 L206.3 271.5 L207.9 267.3 L209.2 265.0 L210.4 260.4 L211.8 256.7 L212.9 252.8 L214.2 249.0 L215.7 245.4 L217.3 241.5 L218.5 237.5 L219.7 234.0 L220.9 230.7 L222.4 228.3 L223.3 225.0 L225.1 221.5 L226.4 219.2 L227.5 217.0 L228.9 214.5 L230.6 213.3 L231.9 212.3 L233.6 211.2 L234.9 210.8 L236.2 210.4 L237.7 211.4 L239.4 210.5 L240.8 212.3 L242.7 212.8 L243.9 214.3 L245.4 216.9 L246.6 220.6 L248.0 225.1 L249.8 228.1 L250.7 232.7 L252.1 235.8 L253.2 239.8 L254.9 245.2 L256.1 250.4 L257.4 255.2 L258.9 260.6 L260.2 265.2 L261.6 270.1 L263.1 275.0 L264.4 279.8 L265.6 284.6 L266.7 288.4 L268.3 292.8 L269.4 298.2 L270.2 303.2 L272.0 307.5 L273.1 312.5 L274.0 316.7 L275.5 321.9 L276.9 326.5 L278.1 331.3 L279.4 335.6 L280.3 339.2 L281.8 343.8 L283.3 348.5 L284.8 351.7 L286.0 355.3 L287.2 357.7 L288.6 362.3 L289.6 365.5 L291.0 368.2 L292.2 372.0 L293.1 375.5 L294.7 378.9 L295.9 383.6 L297.0 386.1 L298.2 390.1 L299.6 393.5 L300.8 396.1 L301.7 399.9 L303.3 403.4 L304.4 406.5 L305.3 410.4 L306.9 414.5 L308.2 417.4 L309.3 421.1 L310.5 424.1 L312.0 427.7 L313.2 432.3 L313.9 435.1 L315.6 439.4 L316.6 441.7 L317.7 446.3 L318.9 449.2 L320.1 452.6 L321.8 455.4 L323.0 459.5 L324.2 463.3 L325.1 459.3 L326.5 453.5 L327.5 449.9 L329.0 445.2 L330.0 440.9 L331.4 437.3 L332.5 432.8 L334.2 427.4 L335.5 424.0 L336.7 418.9 L337.7 414.7 L339.3 410.6 L340.2 406.0 L341.4 401.0 L342.5 397.9 L343.9 393.7 L345.1 388.9 L346.5 385.0 L347.6 382.4 L349.2 378.4 L350.2 374.8 L351.6 370.5 L352.7 365.9 L354.0 362.8 L355.2 359.3 L356.2 354.6 L357.8 350.9 L358.8 347.5 L359.9 344.4 L361.5 339.4 L362.6 335.3 L363.8 331.3 L364.8 326.8 L366.1 323.8 L367.5 318.6 L369.0 315.6 L370.0 310.1 L371.1 305.8 L372.4 301.7 L373.6 297.8 L375.0 294.6 L376.4 290.6 L377.5 287.4 L378.8 283.8 L379.9 280.4 L381.8 276.9 L382.8 274.4 L384.3 270.4 L385.3 267.2 L386.6 264.2 L388.3 261.6 L389.6 256.4 L390.4 253.7 L392.2 249.5 L393.4 244.9 L394.6 242.5 L396.2 238.6 L397.5 234.3 L398.3 230.9 L399.8 228.5 L401.3 225.4 L402.4 222.6 L403.6 219.4 L404.7 217.0 L406.3 215.2 L408.1 212.2 L409.3 211.4 L411.1 211.3 L412.3 210.3 L414.0 211.1 L415.4 210.6 L417.1 210.2 L418.4 211.7 L420.3 212.7 L421.7 214.7 L422.8 216.6 L424.6 221.0 L425.6 223.6 L427.0 228.3 L428.3 231.6 L429.8 236.7 L430.8 239.3 L432.3 245.1 L433.9 249.9 L435.4 256.0 L436.6 260.3 L438.3 265.7 L439.4 270.1 L440.3 275.4 L441.6 280.2 L443.0 283.5 L444.1 288.5 L445.6 294.1 L446.5 297.8 L447.8 303.4 L449.0 306.6 L450.2 311.8 L452.0 317.3 L453.1 322.1 L454.5 325.7 L455.3 331.4 L456.9 334.6 L458.1 339.8 L459.4 343.7 L460.8 347.2 L462.1 351.2 L463.7 354.4 L465.0 358.0 L465.8 362.5 L467.3 365.3 L468.1 368.9 L469.5 373.1 L470.6 375.7 L472.3 378.6 L473.2 383.3 L474.7 385.6 L475.4 389.1 L477.2 392.9 L478.3 397.4 L479.3 399.9 L480.9 403.9 L481.7 407.6 L483.0 410.4 L484.0 414.6 L485.8 417.9 L487.0 420.4 L487.8 424.6 L489.5 428.9 L490.4 431.2 L491.6 435.1 L493.2 438.1 L494.3 442.5 L495.6 446.0 L496.7 448.8 L497.7 452.3 L499.2 455.4 L500.1 459.9 L501.3 462.3 L502.5 458.7 L503.9 455.0 L505.5 450.7 L506.4 444.8 L507.5 441.1 L509.1 436.7 L510.1 432.2 L511.6 428.3 L512.9 424.2 L514.1 418.6 L515.5 414.5 L516.5 410.3 L517.9 405.6 L518.8 401.3 L520.0 398.0 L521.5 392.7 L522.7 390.0 L524.0 385.0 L525.4 381.9 L526.7 377.3 L527.6 374.7 L529.1 371.0 L529.8 366.3 L531.1 362.3 L532.9 359.2 L534.1 355.1 L535.3 351.5 L536.1 348.2 L537.8 343.4 L538.8 340.0 L539.8 335.5 L541.0 331.0 L542.4 327.5 L543.8 322.7 L544.7 318.7 L546.4 314.3 L547.4 310.2 L548.9 306.6 L549.7 301.7 L551.2 298.2 L552.6 293.3 L553.6 291.0 L555.0 287.1 L556.3 284.8 L557.6 280.9 L558.9 277.4 L560.5 275.0 L561.5 270.4 L563.0 267.1 L563.9 264.9 L565.5 261.5 L566.8 257.8 L568.1 252.8 L569.2 249.6 L570.9 246.3 L571.9 242.0 L573.4 238.0 L574.5 234.4 L576.0 232.2 L577.0 228.2 L578.7 225.7 L579.7 221.6 L581.4 220.1 L582.5 215.8 L584.3 214.3 L585.7 212.7 L587.2 211.2 L588.7 210.6 L589.9 211.6 L591.7 210.5 L592.8 210.8 L594.5 210.8 L595.8 211.3 L597.6 213.1 L598.7 214.8 L600.7 216.3 L602.0 220.1 L603.2 224.4 L604.6 227.7 L605.8 232.1 L607.1 236.3 L608.5 239.9 L609.6 245.4 L611.3 250.0 L612.9 256.0 L614.1 260.3 L615.5 265.4 L616.5 270.4 L617.8 274.9 L619.3 278.8 L620.6 283.3 L621.9 289.1 L623.0 292.6 L624.3 297.8 L625.8 302.1 L627.0 308.1 L628.1 312.5 L629.1 317.4 L630.5 322.1 L632.0 325.5 L633.2 331.4 L634.0 335.1 L635.7 339.5 L637.2 343.6 L638.7 347.4 L639.7 352.2 L640.8 354.6 L642.2 358.2 L643.1 361.4 L644.4 366.1 L646.0 369.5 L646.9 372.8 L648.1 375.9 L649.6 379.1 L651.0 382.9 L652.0 386.9 L653.0 390.6 L654.5 393.1 L655.9 396.4 L657.2 400.4 L658.1 404.2 L659.3 406.7" stroke="#1cf01c" stroke-width="2.1" fill="none" stroke-linejoin="round"/><path d="M-129.0 216.0 L-126.5 212.0 L-124.0 209.0 L-122.0 207.8 L-114.0 207.8 L-112.0 209.0 L-110.0 212.0 L-108.0 216.0 L-109.5 216.0 L-112.0 214.8 L-123.5 214.8 L-126.5 216.0ZM-122.4 205.8h1.1v2.6h-1.1zM-120.2 205.7h1.1v2.7h-1.1zM-117.6 205.9h1.1v2.5h-1.1zM-115.9 206.0h1.1v2.4h-1.1zM-114.4 206.3h1.1v2.1h-1.1zM48.5 216.0 L51.0 212.0 L53.5 209.0 L55.5 207.8 L63.5 207.8 L65.5 209.0 L67.5 212.0 L69.5 216.0 L68.0 216.0 L65.5 214.8 L54.0 214.8 L51.0 216.0ZM55.2 206.7h1.1v1.7h-1.1zM57.4 206.0h1.1v2.4h-1.1zM59.8 206.1h1.1v2.3h-1.1zM61.3 206.5h1.1v1.9h-1.1zM63.1 205.9h1.1v2.5h-1.1zM226.0 216.0 L228.5 212.0 L231.0 209.0 L233.0 207.8 L241.0 207.8 L243.0 209.0 L245.0 212.0 L247.0 216.0 L245.5 216.0 L243.0 214.8 L231.5 214.8 L228.5 216.0ZM232.9 206.7h1.1v1.7h-1.1zM234.9 206.6h1.1v1.8h-1.1zM237.1 206.4h1.1v2.0h-1.1zM238.8 206.0h1.1v2.4h-1.1zM241.0 206.0h1.1v2.4h-1.1zM403.5 216.0 L406.0 212.0 L408.5 209.0 L410.5 207.8 L418.5 207.8 L420.5 209.0 L422.5 212.0 L424.5 216.0 L423.0 216.0 L420.5 214.8 L409.0 214.8 L406.0 216.0ZM410.8 206.5h1.1v1.9h-1.1zM412.2 206.4h1.1v2.0h-1.1zM414.6 206.6h1.1v1.8h-1.1zM416.7 205.7h1.1v2.7h-1.1zM418.3 206.2h1.1v2.2h-1.1zM581.0 216.0 L583.5 212.0 L586.0 209.0 L588.0 207.8 L596.0 207.8 L598.0 209.0 L600.0 212.0 L602.0 216.0 L600.5 216.0 L598.0 214.8 L586.5 214.8 L583.5 216.0ZM588.1 206.7h1.1v1.7h-1.1zM589.9 206.0h1.1v2.4h-1.1zM592.0 205.9h1.1v2.5h-1.1zM594.2 205.6h1.1v2.8h-1.1zM596.3 206.4h1.1v2.0h-1.1zM758.5 216.0 L761.0 212.0 L763.5 209.0 L765.5 207.8 L773.5 207.8 L775.5 209.0 L777.5 212.0 L779.5 216.0 L778.0 216.0 L775.5 214.8 L764.0 214.8 L761.0 216.0ZM765.5 206.6h1.1v1.8h-1.1zM767.3 206.2h1.1v2.2h-1.1zM769.7 206.6h1.1v1.8h-1.1zM771.5 206.7h1.1v1.7h-1.1zM773.2 205.6h1.1v2.8h-1.1z" fill="#1cf01c"/>
</g></svg>
<div class="t" style="left:47.75px;top:119.26px;font-size:25.00px;color:#d81c1c;font-family:'Liberation Serif',serif;">TL072</div>
<div class="t" style="left:49.00px;top:149.56px;font-size:25.00px;color:#d81c1c;font-family:'Liberation Serif',serif;letter-spacing:0.1px">15 V/us</div>
<div class="t" style="left:98.10px;top:550.68px;font-size:10.30px;color:#24d424;">CH1:Vrms = 8.25V</div>
<div class="t" style="left:395.80px;top:550.58px;font-size:10.30px;color:#24d424;">CH1:Frequ = 335kHz</div>
<svg class="a" style="left:189px;top:96px" width="11" height="13"><path d="M0.5 0.5H10.5V8L5.5 12.5L0.5 8Z" fill="#f0a060" stroke="#5a3010" stroke-width="0.8"/><path d="M3 2.8H8 M5.5 2.8V9" stroke="#4a2008" stroke-width="1.3"/></svg>
<svg class="a" style="left:7px;top:368px" width="16" height="11"><path d="M0.5 0.5H10L15.5 5.5L10 10.5H0.5Z" fill="#10ee10" stroke="#064006" stroke-width="0.6"/><path d="M6 1.5V9.5" stroke="#000" stroke-width="1.3"/></svg>
<svg class="a" style="left:622px;top:313.5px" width="15" height="11"><path d="M15 0.5H5L0.5 5.5L5 10.5H15Z" fill="#12ee12" stroke="#064006" stroke-width="0.6"/><path d="M6.5 3.2H12 M9.3 3.2V9.5" stroke="#000" stroke-width="1.3"/></svg>
<div class="a" style="left:7px;top:597px;width:74px;height:18px;background:#000;"></div>
<div class="a" style="left:8px;top:601px;width:23px;height:13px;background:#10e010;"></div>
<div class="t" style="left:9.90px;top:603.05px;font-size:10.10px;color:#000;">CH1</div>
<svg class="a" style="left:31px;top:604px" width="11" height="8"><path d="M2.5 2.5H3.5M5 2.5H6M7.5 2.5H8.5" stroke="#30c030" stroke-width="1"/><path d="M0 5.5H9" stroke="#30c030" stroke-width="1"/></svg>
<div class="t" style="left:43.80px;top:603.03px;font-size:10.00px;color:#22c022;letter-spacing:-0.15px">5.00V</div>
<div class="a" style="left:553px;top:597px;width:83px;height:18px;background:#000;"></div>
<div class="t" style="left:555.50px;top:602.37px;font-size:10.20px;color:#d49464;">Time</div>
<div class="t" style="left:590.50px;top:602.37px;font-size:10.20px;color:#d49464;">1.00us</div>
<div class="a" style="left:637px;top:68px;width:163px;height:2px;background:#6e6b66;"></div>
<div class="a" style="left:639px;top:70px;width:161px;height:1px;background:#e6e3de;"></div>
<div class="a" style="left:799px;top:70px;width:1px;height:550px;background:#fff;"></div>
<div class="grp" style="left:642px;top:78px;width:158px;height:94px;border-right:none"></div>
<div class="a" style="left:706.4px;top:75px;width:53px;height:5px;background:#d4d0c8;"></div>
<div class="t" style="left:708.40px;top:73.86px;font-size:10.80px;color:#1a1a1a;">Horizontal</div>
<div class="t" style="left:652.10px;top:86.44px;font-size:11.00px;color:#1a1a1a;">Time / DIV</div>
<div class="cb" style="left:651px;top:102px;width:59px;height:17px;background:#fff">
<div class="t" style="left:3.0px;top:4.58px;font-size:10.65px;color:#141414">1.00us</div>
<div class="btn" style="left:42px"><div class="arr"></div></div>
</div>
<div class="t" style="left:653.80px;top:131.69px;font-size:11.00px;color:#1a1a1a;">Format</div>
<div class="cb" style="left:651px;top:146px;width:59px;height:17px;background:#d4d0c8">
<div class="t" style="left:3.0px;top:4.29px;font-size:11.00px;color:#a4a09a">Y - T</div>
<div class="btn" style="left:42px"><div class="arr dis"></div></div>
</div>
<div class="grp" style="left:642px;top:188px;width:158px;height:213px;border-right:none"></div>
<div class="a" style="left:712.9px;top:185px;width:40px;height:5px;background:#d4d0c8;"></div>
<div class="t" style="left:714.90px;top:183.86px;font-size:10.80px;color:#1a1a1a;">Vertical</div>
<div class="chk" style="left:651px;top:199px"><svg class="a" style="left:3px;top:3px" width="8" height="7"><path d="M0.8 3 L3 5.4 L7.2 0.8" stroke="#000" stroke-width="1.7" fill="none"/></svg></div>
<div class="t" style="left:668.70px;top:200.23px;font-size:10.00px;color:#1a1a1a;">CH1</div>
<div class="cb" style="left:651px;top:216px;width:56px;height:17px;background:#fff">
<div class="a" style="left:1px;top:1px;width:37px;height:15px;background:#0a246a"></div>
<div class="t" style="left:3.0px;top:4.29px;font-size:11.00px;color:#fff">5.00V</div>
<div class="btn" style="left:39px"><div class="arr"></div></div>
</div>
<div class="cb" style="left:651px;top:244px;width:56px;height:17px;background:#fff">
<div class="t" style="left:3.0px;top:4.29px;font-size:11.00px;color:#141414">DC</div>
<div class="btn" style="left:39px"><div class="arr"></div></div>
</div>
<div class="cb" style="left:651px;top:271px;width:56px;height:17px;background:#fff">
<div class="t" style="left:3.0px;top:4.29px;font-size:11.00px;color:#141414">x 1</div>
<div class="btn" style="left:39px"><div class="arr"></div></div>
</div>
<div class="chk" style="left:649px;top:302px"></div>
<div class="t" style="left:666.60px;top:304.04px;font-size:10.00px;color:#1a1a1a;">CH2</div>
<div class="cb" style="left:649px;top:320px;width:56px;height:17px;background:#d4d0c8">
<div class="t" style="left:3.0px;top:4.29px;font-size:11.00px;color:#a4a09a">1.00V</div>
<div class="btn" style="left:39px"><div class="arr dis"></div></div>
</div>
<div class="cb" style="left:649px;top:347px;width:56px;height:17px;background:#d4d0c8">
<div class="t" style="left:3.0px;top:4.29px;font-size:11.00px;color:#a4a09a">AC</div>
<div class="btn" style="left:39px"><div class="arr dis"></div></div>
</div>
<div class="cb" style="left:649px;top:374px;width:56px;height:17px;background:#d4d0c8">
<div class="t" style="left:3.0px;top:4.29px;font-size:11.00px;color:#a4a09a">x 1</div>
<div class="btn" style="left:39px"><div class="arr dis"></div></div>
</div>
<div class="grp" style="left:642px;top:415px;width:158px;height:132px;border-right:none"></div>
<div class="a" style="left:714px;top:412px;width:37px;height:5px;background:#d4d0c8;"></div>
<div class="t" style="left:716.00px;top:410.86px;font-size:10.80px;color:#1a1a1a;">Trigger</div>
<div class="t" style="left:650.90px;top:437.19px;font-size:10.70px;color:#1a1a1a;">Trigger Mode</div>
<div class="t" style="left:650.90px;top:466.04px;font-size:10.70px;color:#1a1a1a;">Trigger Sweep</div>
<div class="t" style="left:650.90px;top:494.74px;font-size:10.70px;color:#1a1a1a;">Trigger Source</div>
<div class="t" style="left:650.90px;top:523.54px;font-size:10.70px;color:#1a1a1a;">Trigger Slope</div>
<div class="cb" style="left:743px;top:432px;width:59px;height:17px;background:#fff">
<div class="t" style="left:3.0px;top:4.29px;font-size:11.00px;color:#141414">Edge</div>
<div class="btn" style="left:42px"><div class="arr"></div></div>
</div>
<div class="cb" style="left:743px;top:461px;width:59px;height:17px;background:#fff">
<div class="t" style="left:3.0px;top:4.29px;font-size:11.00px;color:#141414">Auto</div>
<div class="btn" style="left:42px"><div class="arr"></div></div>
</div>
<div class="cb" style="left:743px;top:490px;width:59px;height:17px;background:#fff">
<div class="t" style="left:3.0px;top:4.29px;font-size:11.00px;color:#141414">CH1</div>
<div class="btn" style="left:42px"><div class="arr"></div></div>
</div>
<div class="cb" style="left:743px;top:519px;width:59px;height:17px;background:#fff">
<div class="t" style="left:3.0px;top:4.29px;font-size:11.00px;color:#141414">+</div>
<div class="btn" style="left:42px"><div class="arr"></div></div>
</div>
<svg class="a" style="left:0;top:0" width="800" height="640" viewBox="0 0 800 640">
<g transform="translate(764.60 124.00) scale(1 0.96) translate(-764.60 -124.00)"><circle cx="764.6" cy="124.0" r="28.5" fill="#b4b4b4" stroke="#2e2e2e" stroke-width="1"/><path d="M744.9 143.7 A28.0 28.0 0 0 1 784.3 104.3 Z" fill="#dcdce2"/><path d="M742.5 146.1 A31.2 31.2 0 1 1 786.7 146.1" fill="none" stroke="#303030" stroke-width="1"/><path d="M745.2 143.4L738.4 150.2" stroke="#1a1a1a" stroke-width="1.3"/><path d="M784.0 143.4L790.8 150.2" stroke="#1a1a1a" stroke-width="1.3"/><path d="M781.2 107.4L784.4 104.2" stroke="#f4f4f4" stroke-width="1.5"/><circle cx="764.6" cy="124.0" r="23.8" fill="#2e2ef2" stroke="#14146a" stroke-width="1"/></g><path d="M769.5 124H784.5" stroke="#f0f0f0" stroke-width="2.2"/>
<g transform="translate(764.60 246.60) scale(1 0.96) translate(-764.60 -246.60)"><circle cx="764.6" cy="246.6" r="28.5" fill="#b4b4b4" stroke="#2e2e2e" stroke-width="1"/><path d="M744.9 266.3 A28.0 28.0 0 0 1 784.3 226.9 Z" fill="#dcdce2"/><path d="M742.5 268.7 A31.2 31.2 0 1 1 786.7 268.7" fill="none" stroke="#303030" stroke-width="1"/><path d="M745.2 266.0L738.4 272.8" stroke="#1a1a1a" stroke-width="1.3"/><path d="M784.0 266.0L790.8 272.8" stroke="#1a1a1a" stroke-width="1.3"/><path d="M781.2 230.0L784.4 226.8" stroke="#f4f4f4" stroke-width="1.5"/><circle cx="764.6" cy="246.6" r="23.8" fill="#0ef00e" stroke="#087008" stroke-width="1"/></g><path d="M749.4 258.2L760.6 250.6" stroke="#f0f0f0" stroke-width="2.2"/>
<g transform="translate(764.60 348.40) scale(1 0.96) translate(-764.60 -348.40)"><circle cx="764.6" cy="348.4" r="28.5" fill="#b4b4b4" stroke="#2e2e2e" stroke-width="1"/><path d="M744.9 368.1 A28.0 28.0 0 0 1 784.3 328.7 Z" fill="#dcdce2"/><path d="M742.5 370.5 A31.2 31.2 0 1 1 786.7 370.5" fill="none" stroke="#303030" stroke-width="1"/><path d="M745.2 367.8L738.4 374.6" stroke="#1a1a1a" stroke-width="1.3"/><path d="M784.0 367.8L790.8 374.6" stroke="#1a1a1a" stroke-width="1.3"/><path d="M781.2 331.8L784.4 328.6" stroke="#f4f4f4" stroke-width="1.5"/><circle cx="764.6" cy="348.4" r="23.8" fill="#a2a2a2" stroke="#3a3a3a" stroke-width="1"/></g><path d="M746.3 340.6L760 346.9" stroke="#f0f0f0" stroke-width="2.2"/>
</svg>
<div class="t" style="left:4.80px;top:625.43px;font-size:11.60px;color:#1a1a1a;">Connected</div>
<div class="a" style="left:395px;top:623px;width:292px;height:20px;border-top:1px solid #8a8782;border-left:1px solid #8a8782"></div>
<div class="a" style="left:688px;top:621px;width:112px;height:20px;border-top:1px solid #8a8782;border-left:1px solid #8a8782"></div>
<div class="t" style="left:693.50px;top:625.64px;font-size:12.24px;color:#1a1a1a;">17-11-2025&nbsp;&nbsp;20:</div>
<svg class="a" style="left:786px;top:626px" width="14" height="14"><path d="M13 2L2 13M13 6L6 13M13 10L10 13" stroke="#8a8782" stroke-width="1"/><path d="M13 3L3 13M13 7L7 13M13 11L11 13" stroke="#fff" stroke-width="1"/></svg>
<div class="t" style="left:681.60px;top:613.07px;font-size:20.00px;color:#fff;font-weight:bold;letter-spacing:3.2px;-webkit-text-stroke:1.3px #fff;opacity:0.5">MYSKU</div>
<div class="a" style="left:683px;top:622px;width:26px;height:9px;background:radial-gradient(ellipse at center,rgba(236,228,70,0.45),rgba(236,228,70,0) 70%);"></div>
<div class="t" style="left:770.00px;top:602.05px;font-size:14.00px;color:#e8e060;font-weight:bold;letter-spacing:2.5px;-webkit-text-stroke:0.6px #e8e060;opacity:0.75">.ru</div>
</body></html>
